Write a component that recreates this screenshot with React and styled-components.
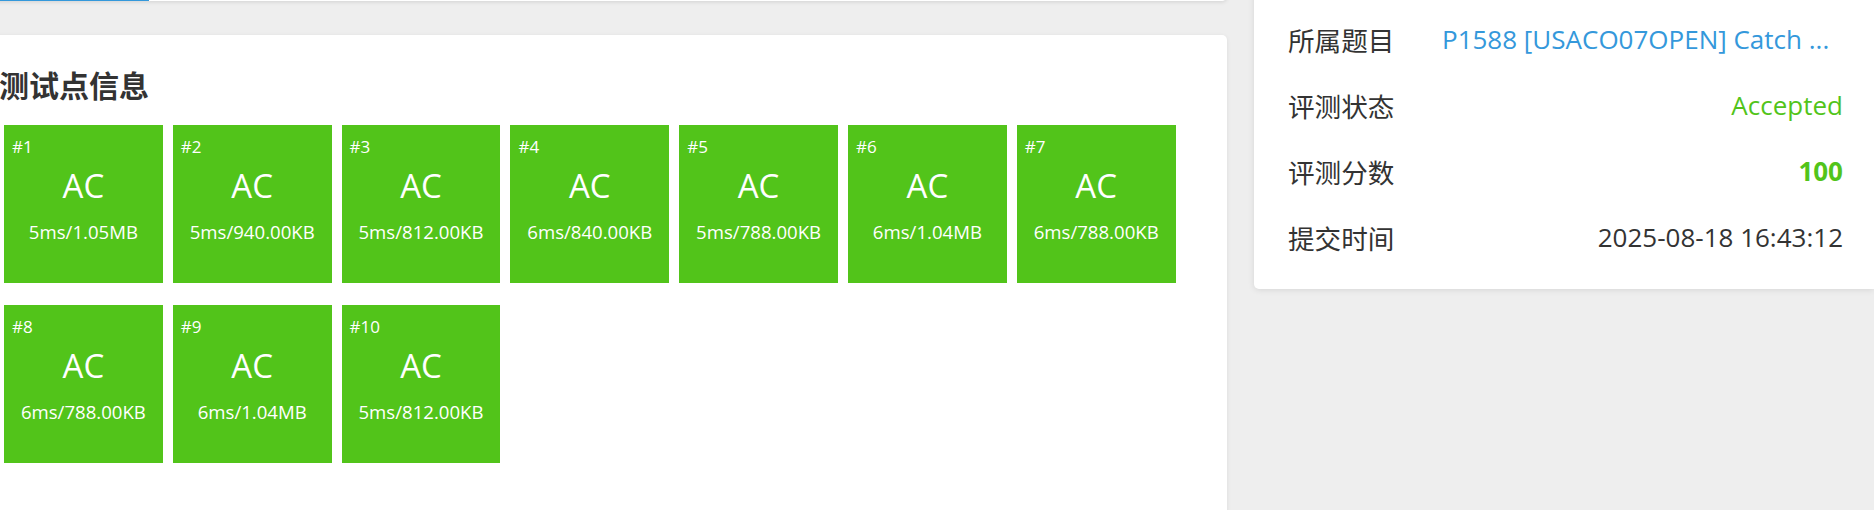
import React from 'react';
import styled, { createGlobalStyle } from 'styled-components';

const GlobalStyle = createGlobalStyle`
  html, body {
    margin: 0;
    padding: 0;
    overflow: hidden;
    background: #eeeeee;
  }
  body {
    font-family: "Open Sans", "Noto Sans CJK SC", sans-serif;
    color: #333;
  }
`;

const cases = [
  { id: 1, time: '5ms', mem: '1.05MB' },
  { id: 2, time: '5ms', mem: '940.00KB' },
  { id: 3, time: '5ms', mem: '812.00KB' },
  { id: 4, time: '6ms', mem: '840.00KB' },
  { id: 5, time: '5ms', mem: '788.00KB' },
  { id: 6, time: '6ms', mem: '1.04MB' },
  { id: 7, time: '6ms', mem: '788.00KB' },
  { id: 8, time: '6ms', mem: '788.00KB' },
  { id: 9, time: '6ms', mem: '1.04MB' },
  { id: 10, time: '5ms', mem: '812.00KB' }
];

const info = [
  { label: '所属题目', value: 'P1588 [USACO07OPEN] Catch ...', color: '#3498db', align: 'left' },
  { label: '评测状态', value: 'Accepted', color: '#52c41a' },
  { label: '评测分数', value: '100', color: '#52c41a', bold: true },
  { label: '提交时间', value: '2025-08-18 16:43:12' }
];

export default function App() {
  return (
    <>
      <GlobalStyle />
      <Page>
        <Main>
          <TabBar>
            <Tab active />
          </TabBar>
          <Card>
            <Title>测试点信息</Title>
            <Grid>
              {cases.map((c) => (
                <Tile key={c.id}>
                  <Index>#{c.id}</Index>
                  <Verdict>AC</Verdict>
                  <Stat>
                    {c.time}/{c.mem}
                  </Stat>
                </Tile>
              ))}
            </Grid>
          </Card>
        </Main>
        <Side>
          {info.map((row) => (
            <Row key={row.label}>
              <Label>{row.label}</Label>
              <Value color={row.color} align={row.align} bold={row.bold}>
                {row.value}
              </Value>
            </Row>
          ))}
        </Side>
      </Page>
    </>
  );
}

const Page = styled.div`
  display: flex;
  align-items: flex-start;
  gap: 27px;
  margin-left: -21px;
`;

const Main = styled.div`
  flex: 0 0 1248px;
  display: flex;
  flex-direction: column;
  gap: 34px;
`;

const TabBar = styled.div`
  height: 48px;
  margin-top: -47px;
  display: flex;
  background: #fff;
  border-radius: 0 0 5px 5px;
  box-shadow: 0 1px 4px rgba(0, 0, 0, 0.12);
`;

const Tab = styled.div`
  width: 170px;
  box-sizing: border-box;
  border-bottom: 2px solid ${({ active }) => (active ? '#3498db' : 'transparent')};
`;

const Card = styled.div`
  background: #fff;
  border-radius: 5px;
  padding: 28px 20px 60px;
  box-shadow: 0 1px 4px rgba(0, 0, 0, 0.08);
`;

const Title = styled.h2`
  margin: 0 0 17px;
  font-size: 30px;
  line-height: 45px;
  font-weight: 700;
  color: #333;
`;

const Grid = styled.div`
  display: flex;
  flex-wrap: wrap;
  gap: 22px 10px;
  padding-left: 5px;
`;

const Tile = styled.div`
  width: 158.8px;
  height: 158px;
  box-sizing: border-box;
  padding: 11px 8px 0;
  display: flex;
  flex-direction: column;
  background: #52c41a;
  color: #fff;
`;

const Index = styled.div`
  font-size: 17px;
  line-height: 22px;
`;

const Verdict = styled.div`
  margin-top: 8px;
  text-align: center;
  font-size: 33px;
  line-height: 40px;
`;

const Stat = styled.div`
  margin-top: 12px;
  text-align: center;
  font-size: 18.6px;
  line-height: 27px;
  white-space: nowrap;
`;

const Side = styled.div`
  flex: 1;
  min-width: 0;
  margin-top: -14px;
  padding: 20px 31px 19px 34px;
  background: #fff;
  border-radius: 0 0 0 5px;
  box-shadow: 0 1px 6px rgba(0, 0, 0, 0.1);
`;

const Row = styled.div`
  display: flex;
  align-items: center;
  height: 66px;
  font-size: 26px;
`;

const Label = styled.div`
  flex: 0 0 154px;
  font-size: 26.6px;
  color: #333;
`;

const Value = styled.div`
  flex: 1;
  min-width: 0;
  white-space: nowrap;
  overflow: hidden;
  text-align: ${({ align }) => align || 'right'};
  color: ${({ color }) => color || '#333'};
  font-weight: ${({ bold }) => (bold ? 700 : 400)};
`;
